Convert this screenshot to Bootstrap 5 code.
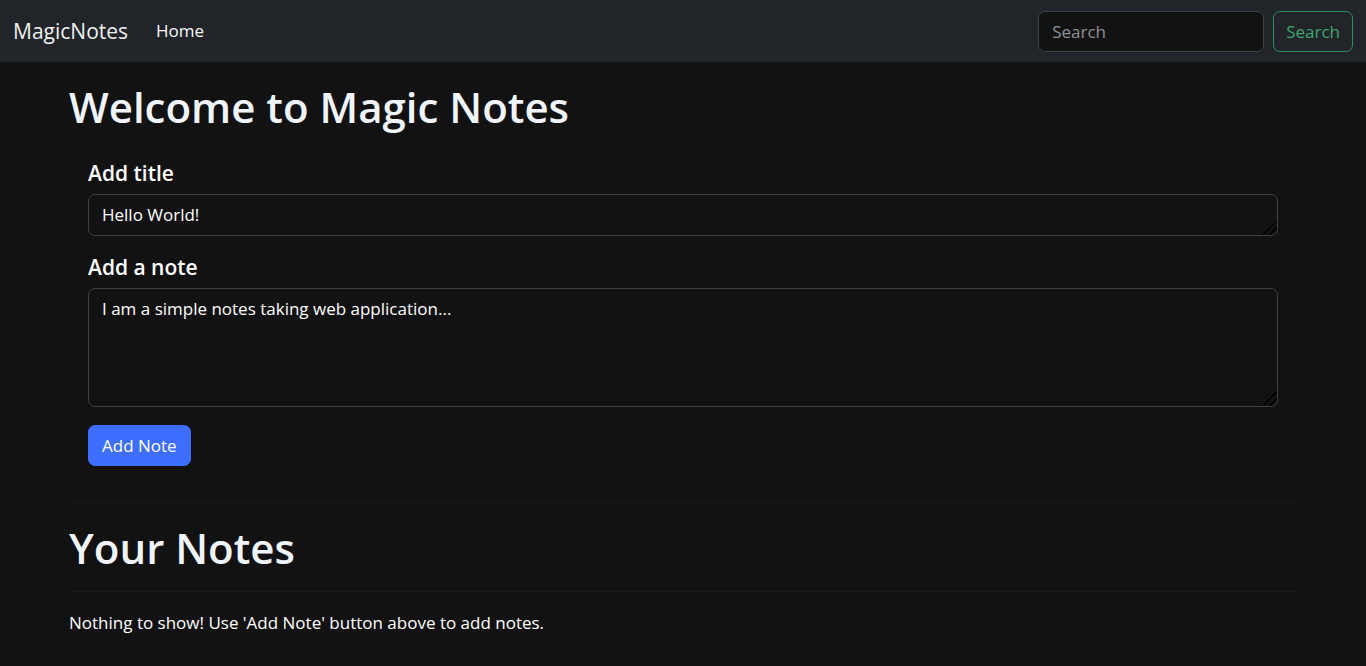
<!DOCTYPE html>
<html lang="en" data-bs-theme="dark">
<head>
<meta charset="utf-8">
<meta name="viewport" content="width=device-width, initial-scale=1">
<title>Magic Notes</title>
<link href="https://cdn.jsdelivr.net/npm/bootstrap@5.3.0/dist/css/bootstrap.min.css" rel="stylesheet">
<style>
  body { background: #121212; color: #fff; font-family: "Open Sans", "Noto Sans", sans-serif; font-size: 17px; line-height: 26px; }
  .topbar { background: #212529; padding: 10px 13px; }
  .topbar .navbar-brand { font-size: 21px; line-height: 32px; padding: 4px 0; margin-right: 20px; color: #f0f0f0; }
  .topbar .nav-link { color: #fff; padding: 8px 9px; }
  .notes-page { max-width: 1254px; padding: 0 13px; margin-top: 18px; }
  h1 { font-size: 42px; line-height: 53px; font-weight: 600; color: #f0f4fc; margin-bottom: 8px; }
  .form-control, .form-control:focus { background: #121212; color: #fff; border: 1px solid #3c4147; border-radius: 7px; padding: 7px 13px; font-size: 17px; line-height: 26px; }
  .form-control::placeholder { color: #8f9296; }
  textarea::-webkit-resizer { background: linear-gradient(135deg, transparent 50%, #000 50%, #000 56%, transparent 56%, transparent 72%, #000 72%, #000 78%, transparent 78%); }
  .topbar .form-control { width: 226px; height: 41px; }
  .search-row { gap: 9px; }
  .btn { font-size: 17px; line-height: 25px; padding: 7px 13px; border-radius: 7px; }
  .btn-add { --bs-btn-color: #fff; --bs-btn-bg: #3d6eff; --bs-btn-border-color: #3d6eff; --bs-btn-hover-color: #fff; --bs-btn-hover-bg: #2c5cf0; }
  .btn-find { --bs-btn-color: #3fa56f; --bs-btn-border-color: #2a8f5b; --bs-btn-hover-color: #fff; --bs-btn-hover-bg: #2a8f5b; padding: 7px 12px; }
  .note-form { background: #121212; border: 1px solid #0f0f0f; border-radius: 7px; }
  .note-form .card-body { padding: 18px; }
  .card-title { font-size: 21px; line-height: 26px; font-weight: 600; margin-bottom: 8px; color: #fff; }
  .title-box { height: 42px; min-height: 42px; }
  .note-box { height: 119px; }
  .field { margin-bottom: 18px; }
  hr { margin: 17px 0 18px; border-top: 1px solid #191919; opacity: 1; }
</style>
</head>
<body>
<nav class="navbar navbar-expand-lg topbar">
  <a class="navbar-brand" href="#">MagicNotes</a>
  <button class="navbar-toggler" type="button" data-bs-toggle="collapse" data-bs-target="#mainMenu" aria-controls="mainMenu" aria-expanded="false" aria-label="Toggle navigation"><span class="navbar-toggler-icon"></span></button>
  <div class="collapse navbar-collapse" id="mainMenu">
    <ul class="navbar-nav me-auto">
      <li class="nav-item"><a class="nav-link active" aria-current="page" href="#">Home</a></li>
    </ul>
    <form class="d-flex search-row" role="search">
      <input class="form-control" type="search" placeholder="Search" aria-label="Search">
      <button class="btn btn-outline-success btn-find" type="submit">Search</button>
    </form>
  </div>
</nav>
<main class="container notes-page">
  <h1>Welcome to Magic Notes</h1>
  <div class="card note-form">
    <form class="card-body">
      <div class="field">
        <label class="card-title d-block" for="noteTitle">Add title</label>
        <textarea class="form-control title-box" id="noteTitle" rows="1">Hello World!</textarea>
      </div>
      <div class="field">
        <label class="card-title d-block" for="noteText">Add a note</label>
        <textarea class="form-control note-box" id="noteText" rows="3">I am a simple notes taking web application...</textarea>
      </div>
      <button class="btn btn-primary btn-add" type="button">Add Note</button>
    </form>
  </div>
  <hr>
  <h1>Your Notes</h1>
  <hr>
  <div id="notes">Nothing to show! Use 'Add Note' button above to add notes.</div>
</main>
<script src="https://cdn.jsdelivr.net/npm/bootstrap@5.3.0/dist/js/bootstrap.bundle.min.js"></script>
</body>
</html>
